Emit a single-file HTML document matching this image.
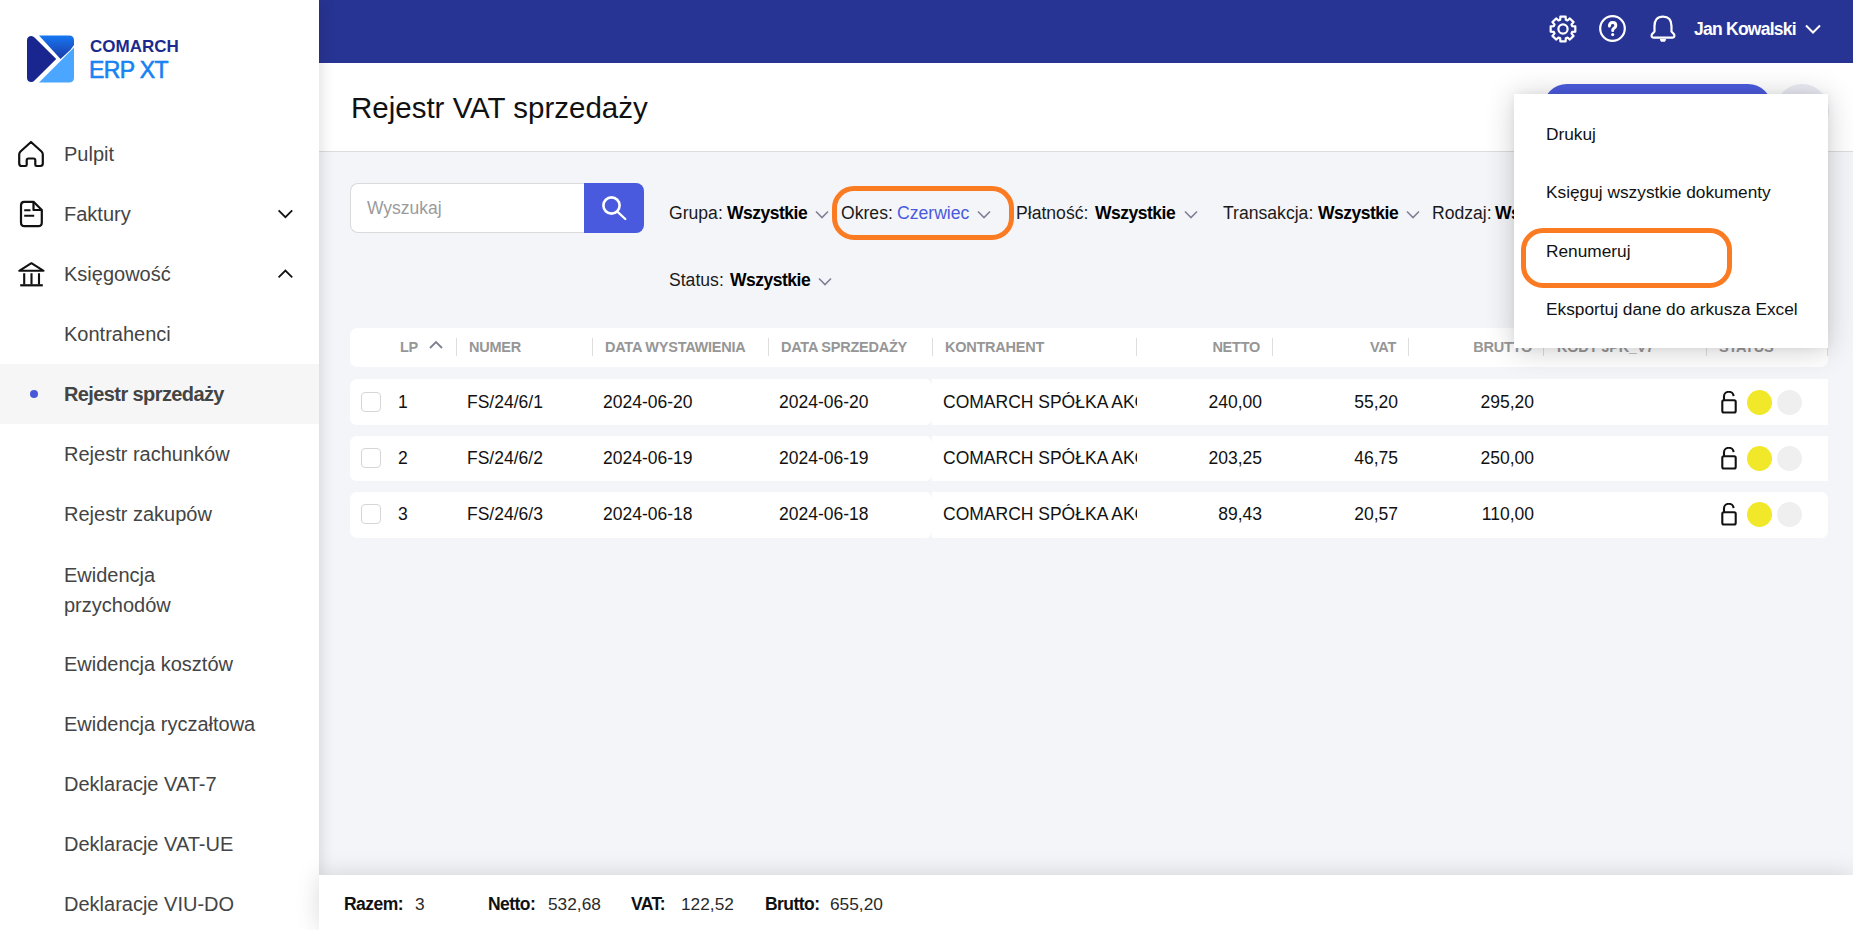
<!DOCTYPE html>
<html><head><meta charset="utf-8">
<style>
*{box-sizing:border-box;margin:0;padding:0}
html,body{width:1853px;height:930px;overflow:hidden;font-family:"Liberation Sans",sans-serif;background:#f4f5f8}
.abs{position:absolute}
#side{position:absolute;left:0;top:0;width:319px;height:930px;background:#fff;box-shadow:0 0 16px rgba(0,0,0,.16);z-index:5}
#hdr{position:absolute;left:319px;top:0;width:1534px;height:63px;background:#283493}
#titlebar{position:absolute;left:319px;top:63px;width:1534px;height:89px;background:#fff;border-bottom:1px solid #dcdcdc}
#main{position:absolute;left:319px;top:152px;width:1534px;height:723px;background:#f4f5f8}
#foot{position:absolute;left:319px;top:875px;width:1534px;height:55px;background:#fff}
.nav{position:absolute;left:64px;font-size:20px;color:#444;white-space:nowrap}
.ico{position:absolute}
.mi{position:absolute;left:32px;font-size:17.3px;color:#111;white-space:nowrap}
.ft{position:absolute;top:894px;font-size:17.3px;color:#2a2a2a;white-space:nowrap;z-index:7}
#content{position:absolute;left:0;top:0;width:1853px;height:930px;z-index:2}
.ft b{color:#111;font-size:17.5px;letter-spacing:-0.55px}
#foot{z-index:6;box-shadow:0 0 24px rgba(0,0,0,.15)}

.flt{position:absolute;font-size:17.6px;color:#1a1a1a;white-space:nowrap}
.flt b{color:#000;font-size:17.5px;letter-spacing:-0.5px}
.chev{position:absolute;fill:none;stroke:#7d8196;stroke-width:1.6}
.th{position:absolute;top:339px;font-size:14.5px;letter-spacing:-0.25px;font-weight:bold;color:#969696;white-space:nowrap}
.sep{position:absolute;top:338px;width:1px;height:18px;background:#dedede}
.row{position:absolute;left:350px;width:1478px;height:46px;border-radius:7px;isolation:isolate}
.row::before{content:"";position:absolute;left:0;top:0;width:582px;height:100%;background:#fff;border-radius:7px;z-index:-1}
.row::after{content:"";position:absolute;left:582px;top:0;right:0;height:100%;background:#fff;border-radius:0 7px 7px 0;z-index:-1}
.r1::after,.r2::after{border-radius:0}
.td{position:absolute;top:13px;font-size:17.5px;color:#111;white-space:nowrap}
.r2 .td,.r3 .td,.r2 .cb,.r3 .cb{margin-top:-1px}
.r2 .ico,.r3 .ico,.r2 .dot,.r3 .dot{margin-top:-1px}
.cb{position:absolute;left:11px;top:13px;width:20px;height:20px;border:1px solid #d6d6d6;border-radius:4px;background:#fff}
.dot{position:absolute;top:11px;width:25px;height:25px;border-radius:50%}

</style></head><body>
<div id="side">
  <!-- logo -->
  <svg class="ico" style="left:27px;top:35px" width="47" height="48" viewBox="0 0 47 48">
    <defs><linearGradient id="lg1" x1="0" y1="0" x2="0" y2="1"><stop offset="0" stop-color="#1677f2"/><stop offset="1" stop-color="#1c3aa6"/></linearGradient></defs>
    <path d="M4.5 1 Q0 1 0 5.5 L0 42.5 Q0 47 4.5 47 Q6 47 7.5 45.5 L29.2 24 L7.5 2.5 Q6 1 4.5 1 Z" fill="#1a2690"/>
    <path d="M12 0.5 L42 0.5 Q47 0.5 47 5.5 L47 10 Q44 15 39 19 L33.5 24 Z" fill="url(#lg1)"/>
    <path d="M47 12.5 L47 42.5 Q47 47.5 42 47.5 L12 47.5 L35 24.5 Z" fill="#4aa6ff"/>
  </svg>
  <div class="abs" style="left:90px;top:37px;font-size:17px;font-weight:bold;color:#1b2a8c;letter-spacing:0">COMARCH</div>
  <div class="abs" style="left:89px;top:57px;font-size:23px;color:#1782f2;-webkit-text-stroke:0.6px #1782f2;letter-spacing:-0.6px">ERP XT</div>

  <svg class="ico" style="left:17px;top:140px" width="28" height="28" viewBox="0 0 28 28" fill="none" stroke="#111" stroke-width="2.2" stroke-linejoin="round">
    <path d="M14 2 L24.5 11.5 Q25.8 12.7 25.8 14.5 V23.5 Q25.8 26 23.3 26 H19.5 Q18.3 26 18.3 24.8 V20.3 Q18.3 18.5 16.5 18.5 H11.5 Q9.7 18.5 9.7 20.3 V24.8 Q9.7 26 8.5 26 H4.7 Q2.2 26 2.2 23.5 V14.5 Q2.2 12.7 3.5 11.5 Z"/>
  </svg>
  <svg class="ico" style="left:19px;top:200px" width="25" height="28" viewBox="0 0 25 28" fill="none" stroke="#111" stroke-width="2.2" stroke-linejoin="round">
    <path d="M5 1.8 H14.5 L22.8 10 V22.5 Q22.8 26.2 19.2 26.2 H5.6 Q2 26.2 2 22.5 V5.5 Q2 1.8 5 1.8 Z"/>
    <path d="M14.5 1.8 V10 H22.8" />
    <path d="M5.2 10.2 H11.5 M5.2 15.8 H15.2" stroke-width="2"/>
  </svg>
  <svg class="ico" style="left:17px;top:260px" width="29" height="28" viewBox="0 0 29 28" fill="none" stroke="#111" stroke-width="2.1">
    <path d="M2.2 10.8 L14.4 3.2 L26.6 10.8 Z" stroke-linejoin="round"/>
    <path d="M3.2 25.3 H25.8" stroke-width="2.2"/>
    <path d="M7.2 13.2 V24.5 M14.5 13.2 V24.5 M22 13.2 V24.5"/>
  </svg>
  <svg class="ico" style="left:277px;top:208px" width="17" height="11" viewBox="0 0 17 11" fill="none" stroke="#111" stroke-width="1.75"><path d="M1.6 2.4 L8.4 9.2 L15.2 2.4"/></svg>
  <svg class="ico" style="left:277px;top:268px" width="17" height="11" viewBox="0 0 17 11" fill="none" stroke="#111" stroke-width="1.75"><path d="M1.6 9.4 L8.4 2.6 L15.2 9.4"/></svg>
  <div class="nav" style="top:143px">Pulpit</div>
  <div class="nav" style="top:203px">Faktury</div>
  <div class="nav" style="top:263px">Księgowość</div>
  <div class="nav" style="top:323px">Kontrahenci</div>
  <div class="abs" style="left:0;top:364px;width:319px;height:60px;background:#f6f6f6"></div>
  <div class="abs" style="left:30px;top:390px;width:8px;height:8px;border-radius:50%;background:#4858d8"></div>
  <div class="nav" style="top:383px;font-weight:bold;letter-spacing:-0.6px">Rejestr sprzedaży</div>
  <div class="nav" style="top:443px">Rejestr rachunków</div>
  <div class="nav" style="top:503px">Rejestr zakupów</div>
  <div class="nav" style="top:563px;line-height:30px;margin-top:-3px">Ewidencja<br>przychodów</div>
  <div class="nav" style="top:653px">Ewidencja kosztów</div>
  <div class="nav" style="top:713px">Ewidencja ryczałtowa</div>
  <div class="nav" style="top:773px">Deklaracje VAT-7</div>
  <div class="nav" style="top:833px">Deklaracje VAT-UE</div>
  <div class="nav" style="top:893px">Deklaracje VIU-DO</div>
</div>
<div id="hdr">
  <!-- gear -->
  <svg class="ico" style="left:1230px;top:15px" width="28" height="28" viewBox="0 0 28 28" fill="none" stroke="#fff" stroke-width="2.2" stroke-linejoin="round">
    <path d="M11.16 4.83 L11.37 1.68 L16.63 1.68 L16.84 4.83 L18.48 5.51 L20.86 3.43 L24.57 7.14 L22.49 9.52 L23.17 11.16 L26.32 11.37 L26.32 16.63 L23.17 16.84 L22.49 18.48 L24.57 20.86 L20.86 24.57 L18.48 22.49 L16.84 23.17 L16.63 26.32 L11.37 26.32 L11.16 23.17 L9.52 22.49 L7.14 24.57 L3.43 20.86 L5.51 18.48 L4.83 16.84 L1.68 16.63 L1.68 11.37 L4.83 11.16 L5.51 9.52 L3.43 7.14 L7.14 3.43 L9.52 5.51Z"/>
    <circle cx="14" cy="14" r="4.6"/>
  </svg>
  <!-- help -->
  <svg class="ico" style="left:1280px;top:15px" width="27" height="27" viewBox="0 0 27 27" fill="none" stroke="#fff" stroke-width="2.2">
    <circle cx="13.5" cy="13.5" r="12.3"/>
    <path d="M10.4 11 Q10.4 7.6 13.6 7.6 Q16.8 7.6 16.8 10.5 Q16.8 12.3 14.8 13.3 Q13.7 13.9 13.7 15.6" stroke-width="3" stroke-linecap="round"/>
    <circle cx="13.7" cy="19.6" r="1.6" fill="#fff" stroke="none"/>
  </svg>
  <!-- bell -->
  <svg class="ico" style="left:1330px;top:15px" width="28" height="28" viewBox="0 0 28 28" fill="none" stroke="#fff" stroke-width="2.2" stroke-linejoin="round">
    <path d="M5.5 16.5 V11 Q5.5 1.6 14 1.6 Q22.5 1.6 22.5 11 V16.5 L25.2 19.5 Q26 22.6 23.5 22.6 H4.5 Q2 22.6 2.8 19.5 Z"/>
    <path d="M11.6 24.6 H16.4 L15.5 26 H12.5 Z" fill="#fff" stroke-width="1.4"/>
  </svg>
  <div class="abs" style="left:1375px;top:19px;font-size:17.5px;font-weight:bold;color:#fff;letter-spacing:-0.75px">Jan Kowalski</div>
  <svg class="ico" style="left:1486px;top:24px" width="16" height="11" viewBox="0 0 16 11" fill="none" stroke="#fff" stroke-width="2"><path d="M1 1.5 L8 8.5 L15 1.5"/></svg>
</div>
<div id="titlebar"><div class="abs" style="left:32px;top:28px;font-size:29.5px;color:#111">Rejestr VAT sprzedaży</div></div>
<div id="main"></div>
<div id="foot"></div>
<div id="content">
  <!-- search -->
  <div class="abs" style="left:350px;top:183px;width:235px;height:50px;background:#fff;border:1px solid #dadada;border-right:none;border-radius:8px 0 0 8px"></div>
  <div class="abs" style="left:367px;top:198px;font-size:17.5px;color:#9b9b9b">Wyszukaj</div>
  <div class="abs" style="left:584px;top:183px;width:60px;height:50px;background:#4a5ade;border-radius:0 8px 8px 0"></div>
  <svg class="ico" style="left:600px;top:194px" width="30" height="30" viewBox="0 0 30 30" fill="none" stroke="#fff" stroke-width="2.6"><circle cx="11.5" cy="11.5" r="8.1"/><path d="M17.6 17.8 L25.3 25" stroke-width="2.3" stroke-linecap="round"/></svg>

  <!-- filters row 1 -->
  <div class="flt" style="left:669px;top:203px">Grupa:</div><div class="flt" style="left:727px;top:203px"><b>Wszystkie</b></div>
  <svg class="chev" style="left:815px;top:210px" width="14" height="9" viewBox="0 0 14 9"><path d="M1 1.5 L7 7.5 L13 1.5"/></svg>
  <div class="flt" style="left:841px;top:203px">Okres:</div><div class="flt" style="left:897px;top:203px;color:#4a5ade;font-size:17.6px">Czerwiec</div>
  <svg class="chev" style="left:977px;top:210px" width="14" height="9" viewBox="0 0 14 9"><path d="M1 1.5 L7 7.5 L13 1.5"/></svg>
  <div class="flt" style="left:1016px;top:203px">Płatność:</div><div class="flt" style="left:1095px;top:203px"><b>Wszystkie</b></div>
  <svg class="chev" style="left:1184px;top:210px" width="14" height="9" viewBox="0 0 14 9"><path d="M1 1.5 L7 7.5 L13 1.5"/></svg>
  <div class="flt" style="left:1223px;top:203px">Transakcja:</div><div class="flt" style="left:1318px;top:203px"><b>Wszystkie</b></div>
  <svg class="chev" style="left:1406px;top:210px" width="14" height="9" viewBox="0 0 14 9"><path d="M1 1.5 L7 7.5 L13 1.5"/></svg>
  <div class="flt" style="left:1432px;top:203px">Rodzaj:</div><div class="flt" style="left:1495px;top:203px"><b>Wszystkie</b></div>
  <!-- status -->
  <div class="flt" style="left:669px;top:270px">Status:</div><div class="flt" style="left:730px;top:270px"><b>Wszystkie</b></div>
  <svg class="chev" style="left:818px;top:277px" width="14" height="9" viewBox="0 0 14 9"><path d="M1 1.5 L7 7.5 L13 1.5"/></svg>
  <!-- orange highlight -->
  <div class="abs" style="left:832px;top:186px;width:182px;height:54px;border:5px solid #fb7b23;border-radius:22px"></div>

  <!-- table header -->
  <div class="abs" style="left:350px;top:328px;width:1478px;height:39px;background:#fff;border-radius:7px"></div>
  <div class="th" style="left:400px">LP</div>
  <svg class="ico" style="left:429px;top:340px" width="14" height="9" viewBox="0 0 14 9" fill="none" stroke="#7d8190" stroke-width="1.8"><path d="M1 8 L7 2 L13 8"/></svg>
  <div class="sep" style="left:456px"></div>
  <div class="th" style="left:469px">NUMER</div>
  <div class="sep" style="left:592px"></div>
  <div class="th" style="left:605px">DATA WYSTAWIENIA</div>
  <div class="sep" style="left:768px"></div>
  <div class="th" style="left:781px">DATA SPRZEDAŻY</div>
  <div class="sep" style="left:932px"></div>
  <div class="th" style="left:945px">KONTRAHENT</div>
  <div class="sep" style="left:1136px"></div>
  <div class="th" style="left:1150px;width:110px;text-align:right">NETTO</div>
  <div class="sep" style="left:1272px"></div>
  <div class="th" style="left:1286px;width:110px;text-align:right">VAT</div>
  <div class="sep" style="left:1408px"></div>
  <div class="th" style="left:1422px;width:110px;text-align:right">BRUTTO</div>
  <div class="sep" style="left:1543px"></div>
  <div class="th" style="left:1557px">KODY JPK_V7</div>
  <div class="sep" style="left:1706px"></div>
  <div class="th" style="left:1719px">STATUS</div>
  <div class="sep" style="left:1827px"></div>
  <div class="row r1" style="top:379px">
    <div class="cb"></div>
    <div class="td" style="left:48px">1</div>
    <div class="td" style="left:117px">FS/24/6/1</div>
    <div class="td" style="left:253px">2024-06-20</div>
    <div class="td" style="left:429px">2024-06-20</div>
    <div class="td" style="left:593px;width:194px;overflow:hidden">COMARCH SPÓŁKA AKCYJNA</div>
    <div class="td" style="left:800px;width:112px;text-align:right">240,00</div>
    <div class="td" style="left:936px;width:112px;text-align:right">55,20</div>
    <div class="td" style="left:1072px;width:112px;text-align:right">295,20</div>
    <svg class="ico" style="left:1369px;top:12px" width="19" height="24" viewBox="0 0 19 24" fill="none" stroke="#111" stroke-width="2.1"><path d="M5 9.2 V6 A4.8 4.8 0 0 1 14.6 5.2"/><rect x="3.3" y="9.2" width="13.4" height="12.3" rx="1.5"/></svg>
    <div class="dot" style="left:1397px;background:#f2e82a"></div>
    <div class="dot" style="left:1427px;background:#efefef"></div>
  </div>
  <div class="row r2" style="top:436px;height:45px">
    <div class="cb"></div>
    <div class="td" style="left:48px">2</div>
    <div class="td" style="left:117px">FS/24/6/2</div>
    <div class="td" style="left:253px">2024-06-19</div>
    <div class="td" style="left:429px">2024-06-19</div>
    <div class="td" style="left:593px;width:194px;overflow:hidden">COMARCH SPÓŁKA AKCYJNA</div>
    <div class="td" style="left:800px;width:112px;text-align:right">203,25</div>
    <div class="td" style="left:936px;width:112px;text-align:right">46,75</div>
    <div class="td" style="left:1072px;width:112px;text-align:right">250,00</div>
    <svg class="ico" style="left:1369px;top:12px" width="19" height="24" viewBox="0 0 19 24" fill="none" stroke="#111" stroke-width="2.1"><path d="M5 9.2 V6 A4.8 4.8 0 0 1 14.6 5.2"/><rect x="3.3" y="9.2" width="13.4" height="12.3" rx="1.5"/></svg>
    <div class="dot" style="left:1397px;background:#f2e82a"></div>
    <div class="dot" style="left:1427px;background:#efefef"></div>
  </div>
  <div class="row r3" style="top:492px">
    <div class="cb"></div>
    <div class="td" style="left:48px">3</div>
    <div class="td" style="left:117px">FS/24/6/3</div>
    <div class="td" style="left:253px">2024-06-18</div>
    <div class="td" style="left:429px">2024-06-18</div>
    <div class="td" style="left:593px;width:194px;overflow:hidden">COMARCH SPÓŁKA AKCYJNA</div>
    <div class="td" style="left:800px;width:112px;text-align:right">89,43</div>
    <div class="td" style="left:936px;width:112px;text-align:right">20,57</div>
    <div class="td" style="left:1072px;width:112px;text-align:right">110,00</div>
    <svg class="ico" style="left:1369px;top:12px" width="19" height="24" viewBox="0 0 19 24" fill="none" stroke="#111" stroke-width="2.1"><path d="M5 9.2 V6 A4.8 4.8 0 0 1 14.6 5.2"/><rect x="3.3" y="9.2" width="13.4" height="12.3" rx="1.5"/></svg>
    <div class="dot" style="left:1397px;background:#f2e82a"></div>
    <div class="dot" style="left:1427px;background:#efefef"></div>
  </div>
</div>
<!-- behind-menu buttons -->
<div class="abs" style="left:1543px;top:84px;width:229px;height:48px;background:#4b5bdc;border-radius:24px"></div>
<div class="abs" style="left:1775px;top:84px;width:54px;height:54px;background:#ebebf5;border-radius:50%"></div>
<!-- dropdown menu -->
<div id="menu" class="abs" style="left:1514px;top:94px;width:314px;height:254px;background:#fff;box-shadow:0 2px 28px rgba(0,0,0,.2),0 0 8px rgba(0,0,0,.05);z-index:8">
  <div class="mi" style="top:30px">Drukuj</div>
  <div class="mi" style="top:88px">Księguj wszystkie dokumenty</div>
  <div class="mi" style="top:147px">Renumeruj</div>
  <div class="mi" style="top:205px">Eksportuj dane do arkusza Excel</div>
  <div class="abs" style="left:7px;top:134px;width:211px;height:60px;border:5px solid #fb7b23;border-radius:22px"></div>
</div>
<!-- footer text -->
<div class="ft" style="left:344px"><b>Razem:</b></div><div class="ft" style="left:415px">3</div>
<div class="ft" style="left:488px"><b>Netto:</b></div><div class="ft" style="left:548px">532,68</div>
<div class="ft" style="left:631px"><b>VAT:</b></div><div class="ft" style="left:681px">122,52</div>
<div class="ft" style="left:765px"><b>Brutto:</b></div><div class="ft" style="left:830px">655,20</div>
</body></html>
